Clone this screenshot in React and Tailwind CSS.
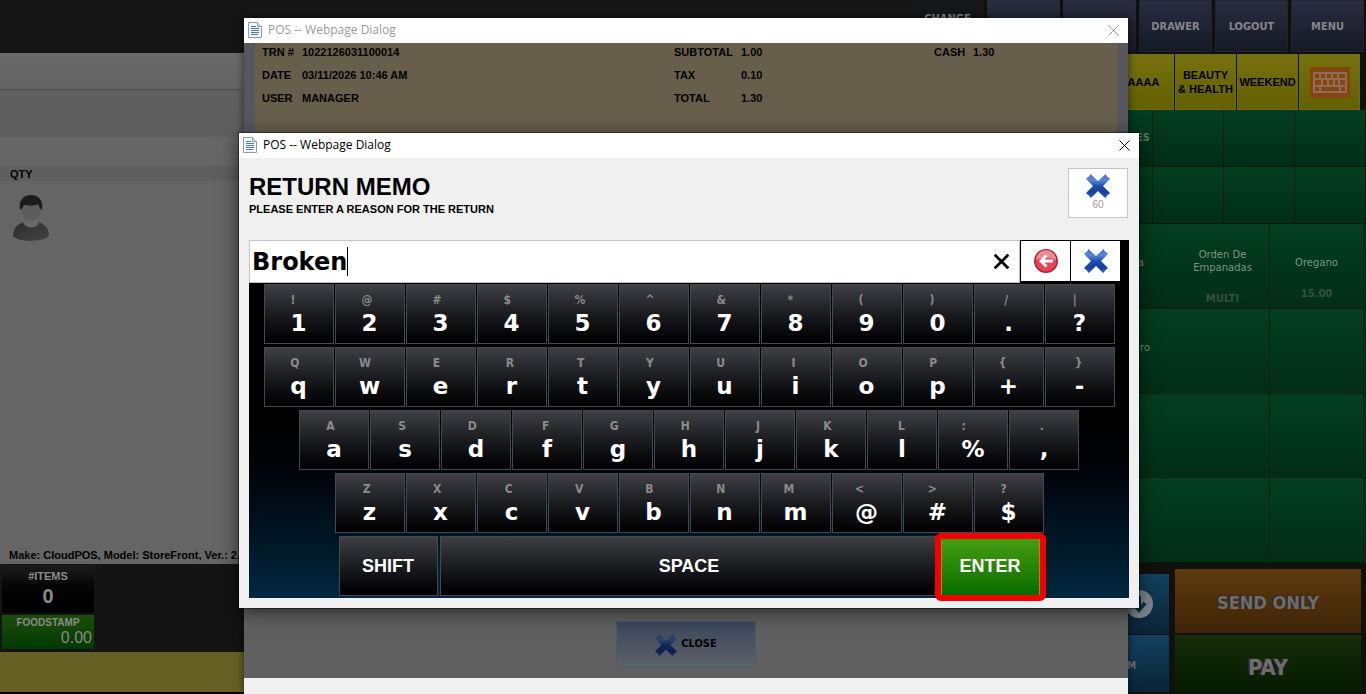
import React from "react";

const tahoma = "font-['DejaVu_Sans_Condensed','DejaVu_Sans',sans-serif] font-bold";

const keyRows = [
  ["!1", "@2", "#3", "$4", "%5", "^6", "&7", "*8", "(9", ")0", "/.", "|?"],
  ["Qq", "Ww", "Ee", "Rr", "Tt", "Yy", "Uu", "Ii", "Oo", "Pp", "{+", "}-"],
  ["Aa", "Ss", "Dd", "Ff", "Gg", "Hh", "Jj", "Kk", "Ll", ":%", ".,"],
  ["Zz", "Xx", "Cc", "Vv", "Bb", "Nn", "Mm", "<@", ">#", "?$"],
];

const receipt = [
  ["TRN #", "1022126031100014", "SUBTOTAL", "1.00", "CASH", "1.30"],
  ["DATE", "03/11/2026 10:46 AM", "TAX", "0.10", "", ""],
  ["USER", "MANAGER", "TOTAL", "1.30", "", ""],
];

function BlueX({ className, id }) {
  return (
    <svg viewBox="0 0 24 24" className={className} aria-hidden="true">
      <defs>
        <linearGradient id={id} x1="0" y1="0" x2="0" y2="1">
          <stop offset="0" stopColor="#3f6cc4" />
          <stop offset="0.25" stopColor="#5c88d8" />
          <stop offset="0.5" stopColor="#1f4fb0" />
          <stop offset="0.75" stopColor="#153f9a" />
          <stop offset="1" stopColor="#2f60bd" />
        </linearGradient>
      </defs>
      <path
        fill={`url(#${id})`}
        d="M4.500 0 L6 1.500 L12 7 L18 1.500 L19.500 0 L21 2.500 L24 4.500 L22.500 6.500 L17 12 L22.500 17.500 L24 19.500 L21.500 21 L19.500 24 L17.500 22.500 L12 17 L6.500 22.500 L4.500 24 L2.500 21 L0 19.500 L1.500 17.500 L7 12 L1.500 6.500 L0 4.500 L3 2.500 Z"
      />
    </svg>
  );
}

function PageIcon() {
  return (
    <svg viewBox="0 0 14 16" className="h-4 w-3.5 shrink-0" aria-hidden="true">
      <path d="M.5.5h9l4 4v11H.5z" fill="#f5f9fb" stroke="#8d9aa3" />
      <path d="M9.5.5v4h4" fill="#dfe9ef" stroke="#8d9aa3" />
      <path d="M3 4.5h5M3 6.5h8M3 8.5h8M3 10.5h8M3 12.5h7" stroke="#4b7c9c" />
    </svg>
  );
}

function CloseIcon({ className }) {
  return (
    <svg viewBox="0 0 11 11" className={className} fill="none" stroke="currentColor" aria-hidden="true">
      <path d="M.5.5l10 10M10.5.5l-10 10" />
    </svg>
  );
}

function TitleBar({ active }) {
  return (
    <div
      className={`flex h-[25px] items-center bg-white pr-[9px] pb-px pl-1 font-['Open_Sans',sans-serif] text-xs ${
        active ? "text-black" : "text-[#999]"
      }`}
    >
      <PageIcon />
      <span className="ml-1.5 flex-1">POS -- Webpage Dialog</span>
      <button aria-label="Close dialog">
        <CloseIcon className="size-[11px]" />
      </button>
    </div>
  );
}

function Person() {
  return (
    <svg viewBox="0 0 38 46" className="h-[46px] w-[38px]" aria-hidden="true">
      <defs>
        <linearGradient id="coat" x1="0" y1="0" x2="1" y2="1">
          <stop offset="0" stopColor="#2c2c2c" />
          <stop offset="1" stopColor="#444" />
        </linearGradient>
      </defs>
      <path d="M1 41c0-9 6-13 12-14h12c7 1 12 6 12 14-5 6-31 7-36 0z" fill="url(#coat)" />
      <path d="M11 28c3 6 14 6 16 0l-4-2v-5h-8v5z" fill="#686868" />
      <ellipse cx="19" cy="15" rx="9" ry="11" fill="#5c5c5c" />
      <path d="M8 15C6 4 13 0 19 0s13 4 11 15c-2-1-3-4-4-6-5 3-12 1-14 1-1 2-2 4-4 5z" fill="#1b1b1b" />
    </svg>
  );
}

function KeyboardIcon() {
  return (
    <svg viewBox="0 0 40 31" className="h-[31px] w-10" aria-hidden="true">
      <rect width="40" height="31" rx="1.5" fill="#84450f" />
      <rect x="3" y="5" width="34" height="21" rx="1" fill="#8f6e58" />
      <g fill="#84450f">
        <path d="M5 7h4v4H5zM11 7h4v4h-4zM17 7h4v4h-4zM23 7h4v4h-4zM29 7h6v4h-6z" />
        <path d="M5 13h6v5H5zM13 13h4v5h-4zM19 13h4v5h-4zM25 13h3v5h-3zM30 13h5v5h-5z" />
        <path d="M5 20h4v4H5zM11 20h18v4H11zM31 20h4v4h-4z" />
      </g>
    </svg>
  );
}

function LeftPanel() {
  return (
    <section className="flex flex-1 flex-col bg-[#141414]">
      <div className="h-[53px] shrink-0 bg-[#151515]" />
      <div className="h-9 shrink-0 bg-linear-to-b from-[#6a6a6a] to-[#636363]" />
      <div className="h-12 shrink-0 border-t border-[#4f4f4f] bg-[#5f5f5f]" />
      <div className="h-[29px] shrink-0 bg-[#666]" />
      <div className="h-[15px] shrink-0 bg-[#5f5f5f] pl-[10px] font-['Liberation_Sans',sans-serif] text-[11px] leading-4 font-bold text-black">
        QTY
      </div>
      <div className="flex flex-1 flex-col justify-between bg-[#656565]">
        <div className="pt-3.5 pl-3">
          <Person />
        </div>
        <p className="pl-[9px] font-['Liberation_Sans',sans-serif] text-[11px] leading-[18px] font-bold text-black">
          Make: CloudPOS, Model: StoreFront, Ver.: 2.0
        </p>
      </div>
      <div className="flex shrink-0 flex-col gap-0.5 pt-px pb-[3px] pl-0.5 font-['Liberation_Sans',sans-serif] text-[#8a8a8a]">
        <div className="h-12 w-[92px] bg-linear-to-b from-[#1c1c1e] to-black pt-[5px] text-center font-bold">
          <div className="text-[11px] leading-3">#ITEMS</div>
          <div className="text-xl leading-7">0</div>
        </div>
        <div className="h-[34px] w-[92px] bg-linear-to-b from-[#1d4d0a] to-[#003a00]">
          <div className="pt-0.5 text-center text-[10px] leading-3 font-bold">FOODSTAMP</div>
          <div className="pr-0.5 text-right text-base leading-[18px]">0.00</div>
        </div>
      </div>
      <div className="h-10 shrink-0 bg-[#665f23]" />
      <div className="h-0.5 shrink-0 bg-black" />
    </section>
  );
}

function RightPanel() {
  const green = "border-r border-b border-[#011c0e] bg-linear-to-b from-[#023f20] to-[#022d17]";
  return (
    <section className="flex w-[455px] shrink-0 flex-col bg-[#12100d]">
      <div className={`flex h-[52px] shrink-0 gap-[3px] text-[11px] text-[#85868c] ${tahoma}`}>
        <button className="w-[73px] bg-linear-to-b from-[#17181b] to-[#0e0e10] pb-3.5">CHANGE</button>
        <div className="w-[73px] bg-linear-to-b from-[#282d40] to-[#161925]" />
        <div className="w-[73px] bg-linear-to-b from-[#282d40] to-[#161925]" />
        {["DRAWER", "LOGOUT", "MENU"].map((label) => (
          <button
            key={label}
            className="w-[73px] border border-[#20242f] bg-linear-to-b from-[#282d40] to-[#161925] pt-0.5"
          >
            {label}
          </button>
        ))}
      </div>
      <div className="mt-0.5 flex h-14 shrink-0 justify-end gap-px pr-1.5 font-['Liberation_Sans',sans-serif] text-[11px] leading-3.5 font-bold whitespace-pre-line text-black">
        {["", "", "", "AAAA", "BEAUTY\n& HEALTH", "WEEKEND"].map((label, i) => (
          <button key={i} className="w-[61px] border border-[#6d6a24] bg-linear-to-b from-[#77720f] to-[#645f00]">
            {label}
          </button>
        ))}
        <button
          aria-label="Keyboard"
          className="flex w-[61px] items-center justify-center border border-[#6d6a24] bg-linear-to-b from-[#77720f] to-[#645f00]"
        >
          <KeyboardIcon />
        </button>
      </div>
      <div className={`grid shrink-0 grid-cols-[repeat(6,71px)] justify-end text-[11px] text-[#5d7a68] ${tahoma}`}>
        {Array.from({ length: 12 }, (_, i) => (
          <button key={i} className={`h-[57px] pr-0.5 text-right ${green}`}>
            {i === 2 ? "ES" : ""}
          </button>
        ))}
      </div>
      <div
        className={`grid flex-1 auto-rows-fr grid-cols-[repeat(4,94px)] justify-end bg-[#022d17] pr-0.5 text-[10px] leading-[13px] text-[#7d9385] font-['DejaVu_Sans',sans-serif]`}
      >
        {Array.from({ length: 16 }, (_, i) => (
          <div
            key={i}
            className={`flex flex-col border-b border-[#011c0e] bg-linear-to-b from-[#023f20] to-[#022d17] text-center ${
              i % 4 >= 2 ? "border-r" : ""
            }`}
          >
            {i === 1 && <span className="pt-8 pr-8 text-right">a</span>}
            {i === 5 && <span className="pt-8 pr-[26px] text-right">ro</span>}
            {i === 2 && (
              <>
                <span className="pt-6">Orden De Empanadas</span>
                <span className="pt-[18px] font-bold text-[#34503f]">MULTI</span>
              </>
            )}
            {i === 3 && (
              <>
                <span className="pt-8">Oregano</span>
                <span className="pt-[18px] font-bold text-[#34503f]">15.00</span>
              </>
            )}
          </div>
        ))}
      </div>
      <div className={`flex h-[131px] shrink-0 justify-end gap-1.5 pt-1.5 pr-[5px] pb-0.5 text-[#6d6d6d] ${tahoma}`}>
        <div className="flex w-[60px] flex-col gap-px pt-[5px]">
          <button
            aria-label="Scroll down"
            className="flex h-[60px] items-center justify-center bg-linear-to-b from-[#124261] to-[#0b2436]"
          >
            <svg viewBox="0 0 28 28" className="size-7" aria-hidden="true">
              <circle cx="14" cy="14" r="14" fill="#7d878d" />
              <path d="M14 6v13M8 13l6 7 6-7" fill="none" stroke="#0f3046" strokeWidth="4" />
            </svg>
          </button>
          <button className="flex-1 bg-linear-to-b from-[#124261] to-[#0b2436] pt-1 pl-[18px] text-left text-[10px]">M</button>
        </div>
        <div className="flex w-[186px] flex-col gap-0.5">
          <button className="h-16 bg-linear-to-b from-[#5e3a10] to-[#3f2406] pt-1 text-lg text-shadow-[-2px_-1px_0_#2a2a2a]">
            SEND ONLY
          </button>
          <button className="flex-1 bg-linear-to-b from-[#172c07] to-[#051b02] pt-2 text-[22px] text-shadow-[-2px_-1px_0_#2a2a2a]">
            PAY
          </button>
        </div>
      </div>
    </section>
  );
}

function ReceiptDialog() {
  return (
    <div className="absolute top-[18px] bottom-0 left-[244px] flex w-[884px] flex-col bg-[#606060] shadow-[0_0_8px_rgba(0,0,0,0.6)]">
      <TitleBar />
      <div className="flex-1 border-x-[11px] border-[#57565c] bg-[#675f4b] pl-[7px] font-['Liberation_Sans',sans-serif] text-[11px] leading-[23px] font-bold text-black">
        <table className="-mt-0.5 table-fixed">
          <tbody>
            {receipt.map((row) => (
              <tr key={row[0]}>
                <td className="w-10">{row[0]}</td>
                <td className="w-[372px]">{row[1]}</td>
                <td className="w-[67px]">{row[2]}</td>
                <td className="w-[193px]">{row[3]}</td>
                <td className="w-[39px]">{row[4]}</td>
                <td>{row[5]}</td>
              </tr>
            ))}
          </tbody>
        </table>
      </div>
      <div className="flex h-[90px] items-end justify-center bg-[#606060] pb-[10px]">
        <button
          className={`flex h-[47px] w-[140px] items-center justify-center gap-1 border border-[#4b5a6e] bg-linear-to-b from-[#3a475b] to-[#5e6269] text-[11px] text-black ${tahoma}`}
        >
          <BlueX id="x-close" className="size-[22px] brightness-50" />
          CLOSE
        </button>
      </div>
      <div className="h-4 bg-[#f0f0f0]" />
    </div>
  );
}

function Key({ pair }) {
  return (
    <button className="flex h-[60px] w-[70px] justify-center border border-[#45484c] bg-linear-to-b from-[#3e4045] to-[#020203] pt-[7px]">
      <span className={`flex flex-col items-start ${tahoma}`}>
        <span className="text-xs leading-4 text-[#8a8b8d]">{pair[0]}</span>
        <span className="font-['DejaVu_Sans',sans-serif] text-[23px] leading-[30px] text-white">{pair[1]}</span>
      </span>
    </button>
  );
}

function MemoDialog() {
  const wide =
    "h-[60px] border border-[#45484c] bg-linear-to-b from-[#3e4045] to-[#020203] font-['Liberation_Sans',sans-serif] text-lg font-bold text-white";
  return (
    <div className="absolute top-[133px] left-[239px] w-[900px] bg-[#f0f0f0] shadow-[0_0_0_1px_rgba(0,0,0,0.4),0_4px_18px_rgba(0,0,0,0.6)]">
      <TitleBar active />
      <div className="px-[10px] pt-[10px] pb-[10px] font-['Liberation_Sans',sans-serif] text-black">
        <div className="flex h-[72px] items-start justify-between pr-px">
          <div className="pt-1 font-bold">
            <h1 className="text-2xl leading-[30px]">RETURN MEMO</h1>
            <p className="text-[11px] leading-3.5">PLEASE ENTER A REASON FOR THE RETURN</p>
          </div>
          <button
            aria-label="Cancel, 60 seconds left"
            className="flex h-[50px] w-[60px] flex-col items-center border border-[#c4c4c4] bg-white pt-[5px] text-[10px] text-[#999]"
          >
            <BlueX id="x-top" className="size-6" />
            <span className="leading-3.5">60</span>
          </button>
        </div>

        <div className="bg-linear-to-b from-black from-40% to-[#00283f]">
          <div className="flex h-11 items-start gap-px bg-black pr-[9px]">
            <div className="relative flex h-[43px] flex-1 items-center border border-[#c4c4c4] bg-white pr-[10px]">
              <input
                aria-label="Return memo"
                defaultValue="Broken"
                className="min-w-0 flex-1 bg-transparent pl-0.5 font-['DejaVu_Sans',sans-serif] text-2xl font-bold outline-none"
              />
              <span className="absolute top-1.5 left-[97px] h-[29px] w-px bg-black" />
              <button aria-label="Clear text">
                <CloseIcon className="size-[15px] stroke-2" />
              </button>
            </div>
            <button aria-label="Backspace" className="mt-px flex h-10 w-[49px] items-center justify-center bg-white">
              <svg viewBox="0 0 24 24" className="size-6" aria-hidden="true">
                <circle cx="12" cy="12" r="11.3" fill="#ea4258" stroke="#9c2434" strokeWidth="1.4" />
                <path d="M2 11a10 10 0 0 1 20 0c-5-3-14-3-20 0z" fill="#f08a95" />
                <path d="M12.500 6.500L7 12l5.500 5.500M7.500 12H19" fill="none" stroke="#fff" strokeWidth="3" />
              </svg>
            </button>
            <button aria-label="Cancel" className="mt-px flex h-10 w-[49px] items-center justify-center bg-white">
              <BlueX id="x-bar" className="size-6" />
            </button>
          </div>
          <div className="flex flex-col gap-[3px] pb-0.5">
            {keyRows.map((row) => (
              <div key={row[0]} className="flex justify-center gap-px">
                {row.map((pair) => (
                  <Key key={pair} pair={pair} />
                ))}
              </div>
            ))}
            <div className="flex justify-center gap-0.5">
              <button className={`w-[99px] ${wide}`}>SHIFT</button>
              <button className={`w-[499px] ${wide}`}>SPACE</button>
              <button className="relative h-[60px] w-[99px] border border-[#8a9a20] bg-linear-to-b from-[#45a012] to-[#006c00] text-lg font-bold text-white">
                ENTER
                <span className="absolute -inset-x-[7px] -top-1 -bottom-1.5 rounded-md border-[6px] border-[#f40000]" />
              </button>
            </div>
          </div>
        </div>
      </div>
    </div>
  );
}

export default function App() {
  return (
    <main className="relative flex h-screen overflow-hidden bg-black">
      <LeftPanel />
      <RightPanel />
      <ReceiptDialog />
      <MemoDialog />
    </main>
  );
}
